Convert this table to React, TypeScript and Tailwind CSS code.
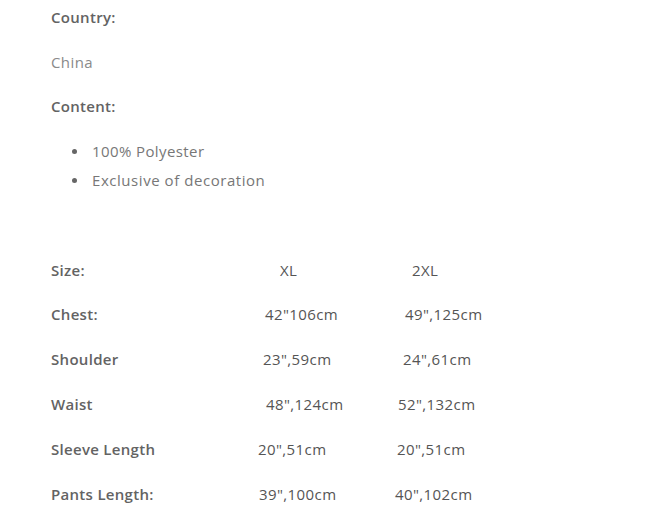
import React from "react";

const rows: { label: string; a: string; b: string; pa: string; pb: string; mt: string }[] = [
  { label: "Size:", a: "XL", b: "2XL", pa: "pl-[40px]", pb: "pl-[32px]", mt: "mt-0" },
  { label: "Chest:", a: "42\"106cm", b: "49\",125cm", pa: "pl-[25px]", pb: "pl-[25px]", mt: "mt-[20px]" },
  { label: "Shoulder", a: "23\",59cm", b: "24\",61cm", pa: "pl-[23px]", pb: "pl-[23px]", mt: "mt-[21px]" },
  { label: "Waist", a: "48\",124cm", b: "52\",132cm", pa: "pl-[26px]", pb: "pl-[18px]", mt: "mt-[21px]" },
  { label: "Sleeve Length", a: "20\",51cm", b: "20\",51cm", pa: "pl-[18px]", pb: "pl-[17px]", mt: "mt-[21px]" },
  { label: "Pants Length:", a: "39\",100cm", b: "40\",102cm", pa: "pl-[19px]", pb: "pl-[15px]", mt: "mt-[21px]" },
];

export default function App() {
  return (
    <div
      className="w-[672px] h-[516px] bg-white overflow-hidden pl-[51px] pt-[5px] text-[15px] tracking-[0.4px]"
      style={{ fontFamily: '"Open Sans", "Noto Sans", sans-serif' }}
    >
      <p className="leading-[24px] font-semibold tracking-[0.3px] text-[#636363]">Country:</p>
      <p className="mt-[21px] leading-[24px] text-[#8a8a8a]">China</p>
      <p className="mt-[20px] leading-[24px] font-semibold tracking-[0.3px] text-[#636363]">Content:</p>
      <ul className="mt-[21px] text-[#777777]">
        <li className="flex items-center leading-[24px]">
          <span className="ml-[21px] w-[5px] h-[5px] rounded-full bg-[#666]" />
          <span className="ml-[15px]">100% Polyester</span>
        </li>
        <li className="mt-[5px] flex items-center leading-[24px]">
          <span className="ml-[21px] w-[5px] h-[5px] rounded-full bg-[#666]" />
          <span className="ml-[15px] tracking-[0.55px]">Exclusive of decoration</span>
        </li>
      </ul>
      <div className="mt-[66px] text-[#555555]">
        {rows.map((r) => (
          <div key={r.label} className={`flex leading-[24px] ${r.mt}`}>
            <div className="w-[189px] font-semibold tracking-[0.3px] text-[#636363]">{r.label}</div>
            <div className={`w-[140px] ${r.pa}`}>{r.a}</div>
            <div className={`${r.pb}`}>{r.b}</div>
          </div>
        ))}
      </div>
    </div>
  );
}
